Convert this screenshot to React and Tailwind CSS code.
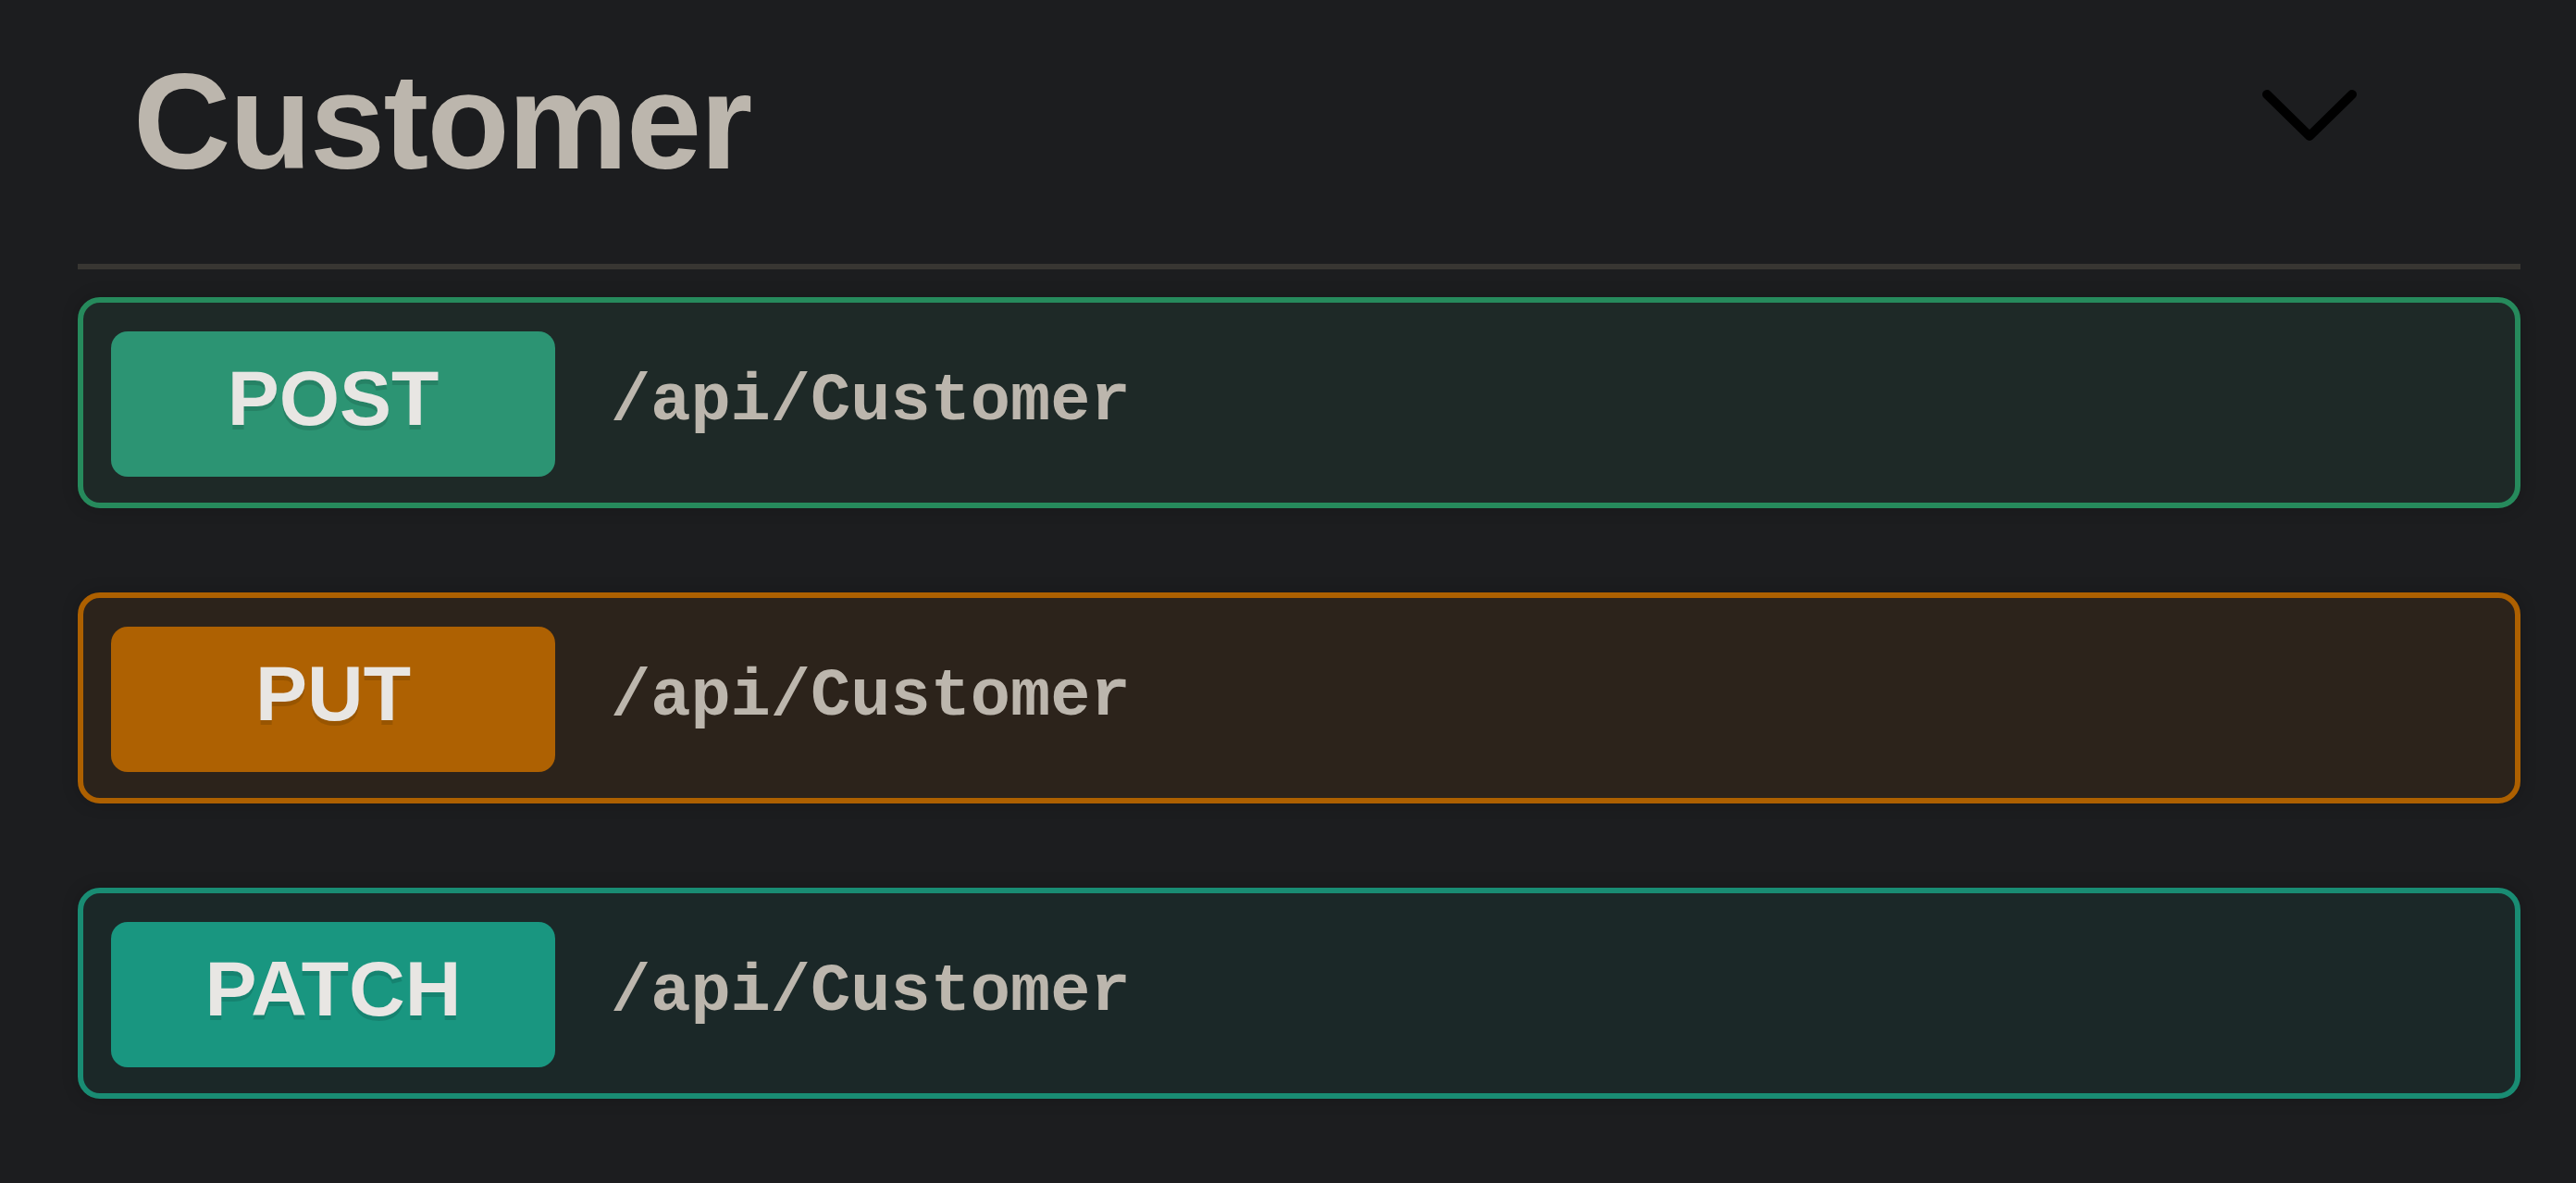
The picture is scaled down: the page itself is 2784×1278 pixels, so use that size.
import React from "react";

const ops = [
  {
    method: "POST",
    card: "bg-[#1e2927] border-[#268a5c]",
    badge: "bg-[#2c9473]",
  },
  {
    method: "PUT",
    card: "bg-[#2c231b] border-[#ad6000]",
    badge: "bg-[#ae6102]",
  },
  {
    method: "PATCH",
    card: "bg-[#1b2828] border-[#198c73]",
    badge: "bg-[#199680]",
  },
];

function OpBlock({ method, card, badge }) {
  return (
    <div
      className={`flex items-start h-[228px] border-[6px] rounded-[24px] pl-[30px] pt-[31px] shadow-[0_0_18px_rgba(0,0,0,0.19)] ${card}`}
    >
      <div
        className={`w-[480px] h-[157px] shrink-0 rounded-[18px] pt-[30px] text-center text-[84px] leading-none font-bold text-[#e8e6e3] [text-shadow:0_5px_0_rgba(0,0,0,0.12)] font-['Liberation_Sans',Arial,sans-serif] ${badge}`}
      >
        {method}
      </div>
      <span className="ml-[60px] mt-[40px] text-[72px] leading-none font-bold text-[#bcb6ad] font-['Liberation_Mono','Courier_New',monospace]">
        /api/Customer
      </span>
    </div>
  );
}

export default function App() {
  return (
    <div className="min-h-screen bg-[#1c1d1f] pl-[84px] pr-[60px]">
      <div className="flex items-start h-[291px] border-b-[6px] border-[#383632]">
        <h3 className="ml-[60px] mt-[59px] text-[146px] leading-none font-bold tracking-[-1.75px] text-[#bcb6ad] font-['Liberation_Sans',Arial,sans-serif]">
          Customer
        </h3>
        <svg
          className="ml-auto mr-[172px] mt-[92px]"
          width="112"
          height="65"
          viewBox="0 0 112 65"
          fill="none"
        >
          <polyline
            points="10,10 56,55 102,10"
            stroke="#000"
            strokeWidth="10"
            strokeLinecap="round"
            strokeLinejoin="round"
          />
        </svg>
      </div>
      <div className="mt-[30px] flex flex-col gap-[91px]">
        {ops.map((o) => (
          <OpBlock key={o.method} {...o} />
        ))}
      </div>
    </div>
  );
}
